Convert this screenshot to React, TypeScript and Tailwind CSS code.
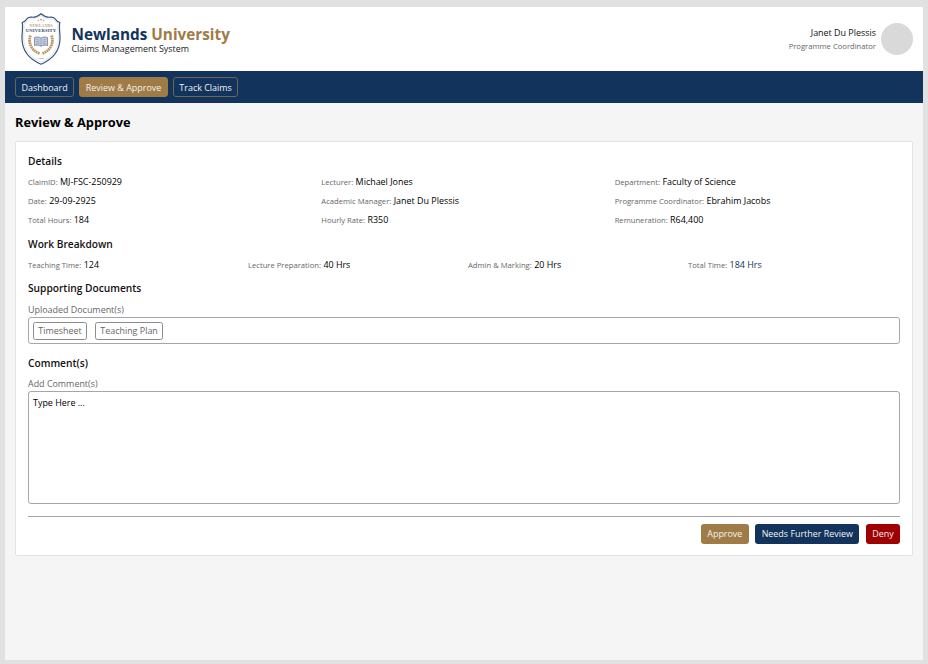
import type { ReactNode } from "react";

const Crest = () => (
  <svg width="40" height="52" viewBox="0 0 40 52" className="shrink-0" aria-label="Newlands University crest">
    <path
      d="M20 .8C17.500 3 14 4.600 10.500 4.200C8.500 4 6.500 4.600 5.300 6.500C4.600 8 3 9 1.200 9.500C2.300 14 .8 20 1 26C1.300 37 8 46 20 51.200C32 46 38.700 37 39 26C39.200 20 37.700 14 38.800 9.500C37 9 35.400 8 34.700 6.500C33.500 4.600 31.500 4 29.500 4.200C26 4.600 22.500 3 20 .8Z"
      fill="#fff"
      stroke="#3c5579"
      strokeWidth="1.200"
    />
    <path
      d="M20 2.500C17 4.800 14 6 10.500 5.800C8 5.700 7 6.600 6.200 8C5.500 9.300 4.300 10.200 3 10.700C3.700 15 2.600 20 2.700 26C3 36 9.300 44.500 20 49.300C30.700 44.500 37 36 37.300 26C37.400 20 36.300 15 37 10.700C35.700 10.200 34.500 9.300 33.800 8C33 6.600 32 5.700 29.500 5.800C26 6 23 4.800 20 2.500Z"
      fill="none"
      stroke="#c5cdd8"
      strokeWidth=".5"
    />
    <g fill="#b99767">
      <circle cx="17.300" cy="7.200" r=".7" />
      <circle cx="20" cy="6.600" r=".9" />
      <circle cx="22.700" cy="7.200" r=".7" />
    </g>
    <text x="20" y="13.600" textAnchor="middle" textLength="23" fontSize="3.700" fontWeight="700" fill="#bb9a6c" className="font-['Liberation_Serif',serif]">NEWLANDS</text>
    <text x="20" y="19.400" textAnchor="middle" textLength="30.500" fontSize="4.700" fontWeight="700" fill="#2c4a73" className="font-['Liberation_Serif',serif]">UNIVERSITY</text>
    <g fill="none" stroke="#bd9a66" strokeWidth="2.800" strokeDasharray="1.800 .5">
      <path d="M9.500 22.500C7 29 9.500 37 18.500 40.500" />
      <path d="M30.500 22.500C33 29 30.500 37 21.500 40.500" />
    </g>
    <path d="M13.500 24.500C16 23.600 18.500 24 20 25.200C21.500 24 24 23.600 26.500 24.500V32.600C24 31.800 21.500 32.200 20 33.300C18.500 32.200 16 31.800 13.500 32.600Z" fill="#c3cdda" stroke="#5d7599" strokeWidth=".7" />
    <path d="M20 25.200V33.200M15 26.500L18.500 27M15 28.500L18.500 29M15 30.500L18.500 31M25 26.500L21.500 27M25 28.500L21.500 29M25 30.500L21.500 31" stroke="#7288a8" strokeWidth=".5" />
    <text x="20" y="46" textAnchor="middle" fontSize="2.800" fontWeight="700" fill="#5d7599" className="font-['Liberation_Serif',serif]">1984</text>
  </svg>
);

const NavButton = ({ children, active = false }: { children: ReactNode; active?: boolean }) => (
  <button
    className={`h-5 rounded-[3px] border px-[5.500px] pt-0.5 text-[8.960px] leading-none text-[#f2f2f2] ${
      active ? "border-[#a07b46] bg-[#a07b46]" : "border-[#6d6453]"
    }`}
  >
    {children}
  </button>
);

const Heading = ({ children }: { children: ReactNode }) => (
  <h2 className="text-[10.200px] leading-[20px] font-semibold text-[#111]">{children}</h2>
);

const Field = ({ label, value, accent = false }: { label: string; value: string; accent?: boolean }) => (
  <div className="h-[19px] leading-[19px] whitespace-nowrap">
    <span className="mr-[.4px] text-[7.650px] text-[#666]">{label}: </span>
    <span className={`text-[8.930px] ${accent ? "text-[#12335c]" : "text-black"}`}>{value}</span>
  </div>
);

const details = [
  ["ClaimID", "MJ-FSC-250929"],
  ["Lecturer", "Michael Jones"],
  ["Department", "Faculty of Science"],
  ["Date", "29-09-2925"],
  ["Academic Manager", "Janet Du Plessis"],
  ["Programme Coordinator", "Ebrahim Jacobs"],
  ["Total Hours", "184"],
  ["Hourly Rate", "R350"],
  ["Remuneration", "R64,400"],
];

const breakdown = [
  ["Teaching Time", "124"],
  ["Lecture Preparation", "40 Hrs"],
  ["Admin & Marking", "20 Hrs"],
  ["Total Time", "184 Hrs"],
];

export default function App() {
  return (
    <div className="h-[664px] w-[928px] bg-[#e1e1e1] pt-[7px] pr-[5px] pb-1 pl-[5px] font-['Open_Sans','Noto_Sans',sans-serif] text-[8.930px] text-black">
      <div className="flex h-full flex-col bg-[#f5f5f5]">
        <header className="flex h-16 shrink-0 items-center bg-white pr-[10px] pl-[16px]">
          <Crest />
          <div className="ml-[10.500px] flex flex-col pt-0.5">
            <div className="text-[15.300px] leading-[17px] font-bold text-[#12335c]">
              Newlands <span className="text-[#a07b46]">University</span>
            </div>
            <div className="text-[8.930px] leading-[12px] text-[#222]">Claims Management System</div>
          </div>
          <div className="ml-auto pt-px text-right">
            <div className="text-[8.930px] leading-[14px] text-[#111]">Janet Du Plessis</div>
            <div className="text-[7.650px] leading-[13px] text-[#666]">Programme Coordinator</div>
          </div>
          <div className="ml-[5px] size-8 rounded-full bg-[#d9d9d9]" />
        </header>
        <nav className="flex h-8 shrink-0 items-center gap-[5px] bg-[#12335c] px-[10px]">
          <NavButton>Dashboard</NavButton>
          <NavButton active>Review &amp; Approve</NavButton>
          <NavButton>Track Claims</NavButton>
        </nav>
        <main className="px-[10px] pt-[10px]">
          <h1 className="text-[12.800px] leading-[18px] font-bold">Review &amp; Approve</h1>
          <section className="mt-[10px] h-[415px] rounded-[2px] border border-[#e3e3e3] bg-white px-3 pt-[9px]">
            <Heading>Details</Heading>
            <div className="mt-px grid grid-cols-3 gap-x-2">
              {details.map(([label, value]) => (
                <Field key={label} label={label} value={value} />
              ))}
            </div>
            <div className="mt-[5px]">
              <Heading>Work Breakdown</Heading>
            </div>
            <div className="mt-px grid grid-cols-4 gap-x-2">
              {breakdown.map(([label, value]) => (
                <Field key={label} label={label} value={value} accent={label === "Total Time"} />
              ))}
            </div>
            <div className="mt-1">
              <Heading>Supporting Documents</Heading>
            </div>
            <div className="mt-[3px] h-4 pt-px leading-4 text-[#666]">Uploaded Document(s)</div>
            <div className="flex h-[27px] items-center gap-2 rounded-[3px] border border-[#a6a6a6] px-1">
              {["Timesheet", "Teaching Plan"].map((name) => (
                <button key={name} className="h-[18px] rounded-[2.500px] border border-[#8c8c8c] px-[4.300px] pt-px leading-none text-[#666]">
                  {name}
                </button>
              ))}
            </div>
            <div className="mt-[9px]">
              <Heading>Comment(s)</Heading>
            </div>
            <div className="mt-0.5 h-4 pt-px leading-4 text-[#666]">Add Comment(s)</div>
            <div className="h-[113px] rounded-[3px] border border-[#a6a6a6] px-1 pt-1 leading-[13px]">Type Here ...</div>
            <div className="mt-3 h-px bg-[#a6a6a6]" />
            <div className="mt-[7px] flex justify-end gap-[6.500px] leading-none text-[#f2f2f2]">
              <button className="h-[19.500px] rounded-[3px] bg-[#a07b46] px-[6.400px] pt-px">Approve</button>
              <button className="h-[19.500px] rounded-[3px] bg-[#12335c] px-[6.400px] pt-px">Needs Further Review</button>
              <button className="h-[19.500px] rounded-[3px] bg-[#a00000] px-[6.400px] pt-px">Deny</button>
            </div>
          </section>
        </main>
      </div>
    </div>
  );
}
